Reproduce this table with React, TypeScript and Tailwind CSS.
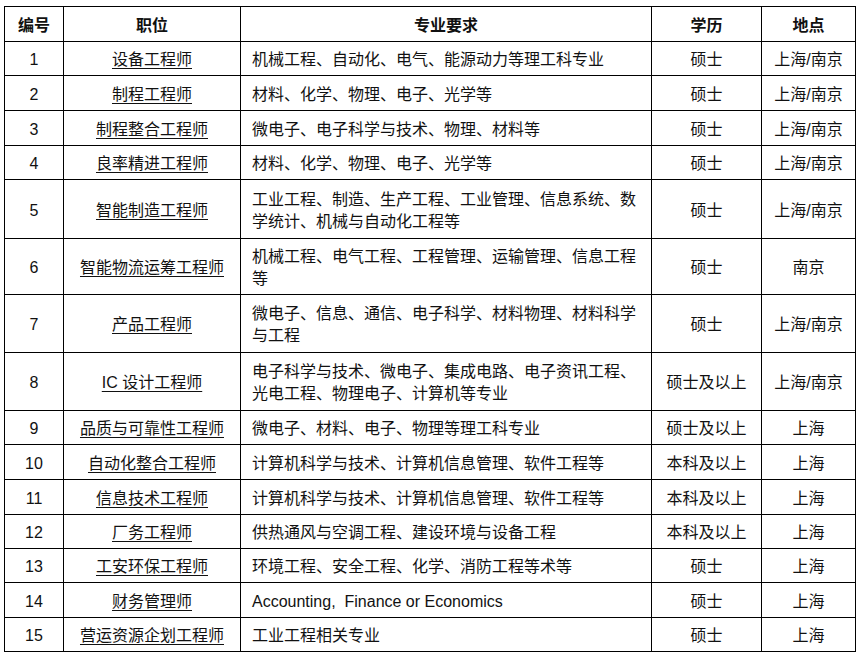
import React from "react";

type Row = {
  no: string;
  title: string;
  req: string[];
  edu: string;
  loc: string;
  h: string;
};

const rows: Row[] = [
  { no: "1", title: "设备工程师", req: ["机械工程、自动化、电气、能源动力等理工科专业"], edu: "硕士", loc: "上海/南京", h: "h-[34px]" },
  { no: "2", title: "制程工程师", req: ["材料、化学、物理、电子、光学等"], edu: "硕士", loc: "上海/南京", h: "h-[35px]" },
  { no: "3", title: "制程整合工程师", req: ["微电子、电子科学与技术、物理、材料等"], edu: "硕士", loc: "上海/南京", h: "h-[35px]" },
  { no: "4", title: "良率精进工程师", req: ["材料、化学、物理、电子、光学等"], edu: "硕士", loc: "上海/南京", h: "h-[34px]" },
  { no: "5", title: "智能制造工程师", req: ["工业工程、制造、生产工程、工业管理、信息系统、数", "学统计、机械与自动化工程等"], edu: "硕士", loc: "上海/南京", h: "h-[59px]" },
  { no: "6", title: "智能物流运筹工程师", req: ["机械工程、电气工程、工程管理、运输管理、信息工程", "等"], edu: "硕士", loc: "南京", h: "h-[56px]" },
  { no: "7", title: "产品工程师", req: ["微电子、信息、通信、电子科学、材料物理、材料科学", "与工程"], edu: "硕士", loc: "上海/南京", h: "h-[58px]" },
  { no: "8", title: "IC 设计工程师", req: ["电子科学与技术、微电子、集成电路、电子资讯工程、", "光电工程、物理电子、计算机等专业"], edu: "硕士及以上", loc: "上海/南京", h: "h-[58px]" },
  { no: "9", title: "品质与可靠性工程师", req: ["微电子、材料、电子、物理等理工科专业"], edu: "硕士及以上", loc: "上海", h: "h-[34px]" },
  { no: "10", title: "自动化整合工程师", req: ["计算机科学与技术、计算机信息管理、软件工程等"], edu: "本科及以上", loc: "上海", h: "h-[35px]" },
  { no: "11", title: "信息技术工程师", req: ["计算机科学与技术、计算机信息管理、软件工程等"], edu: "本科及以上", loc: "上海", h: "h-[35px]" },
  { no: "12", title: "厂务工程师", req: ["供热通风与空调工程、建设环境与设备工程"], edu: "本科及以上", loc: "上海", h: "h-[34px]" },
  { no: "13", title: "工安环保工程师", req: ["环境工程、安全工程、化学、消防工程等术等"], edu: "硕士", loc: "上海", h: "h-[34px]" },
  { no: "14", title: "财务管理师", req: ["Accounting,\u00a0\u00a0Finance or Economics"], edu: "硕士", loc: "上海", h: "h-[35px]" },
  { no: "15", title: "营运资源企划工程师", req: ["工业工程相关专业"], edu: "硕士", loc: "上海", h: "h-[34px]" },
];

const cols = "grid grid-cols-[59px_177px_411px_110px_94px]";
const cell = "border-r border-b border-black flex items-center pt-[3px]";

export default function App() {
  return (
    <div
      className="bg-white w-[862px] h-[656px] pt-[6px] pl-[4px] text-[#111] text-[16px]"
      style={{ fontFamily: '"Liberation Sans", "Noto Sans CJK SC", sans-serif' }}
    >
      <div className="w-[852px] border-l border-t border-black">
        <div className={`${cols} h-[35px] font-bold`}>
          <div className={`${cell} justify-center`}>编号</div>
          <div className={`${cell} justify-center`}>职位</div>
          <div className={`${cell} justify-center`}>专业要求</div>
          <div className={`${cell} justify-center`}>学历</div>
          <div className={`${cell} justify-center`}>地点</div>
        </div>
        {rows.map((r) => (
          <div key={r.no} className={`${cols} ${r.h}`}>
            <div className={`${cell} justify-center`}>{r.no}</div>
            <div className={`${cell} justify-center`}>
              <span className="underline underline-offset-[3px] decoration-1">{r.title}</span>
            </div>
            <div className={`${cell} pl-[11px]`}>
              <div className="leading-[22px] whitespace-nowrap">
                {r.req.map((l, i) => (
                  <div key={i}>{l}</div>
                ))}
              </div>
            </div>
            <div className={`${cell} justify-center`}>{r.edu}</div>
            <div className={`${cell} justify-center`}>{r.loc}</div>
          </div>
        ))}
      </div>
    </div>
  );
}
